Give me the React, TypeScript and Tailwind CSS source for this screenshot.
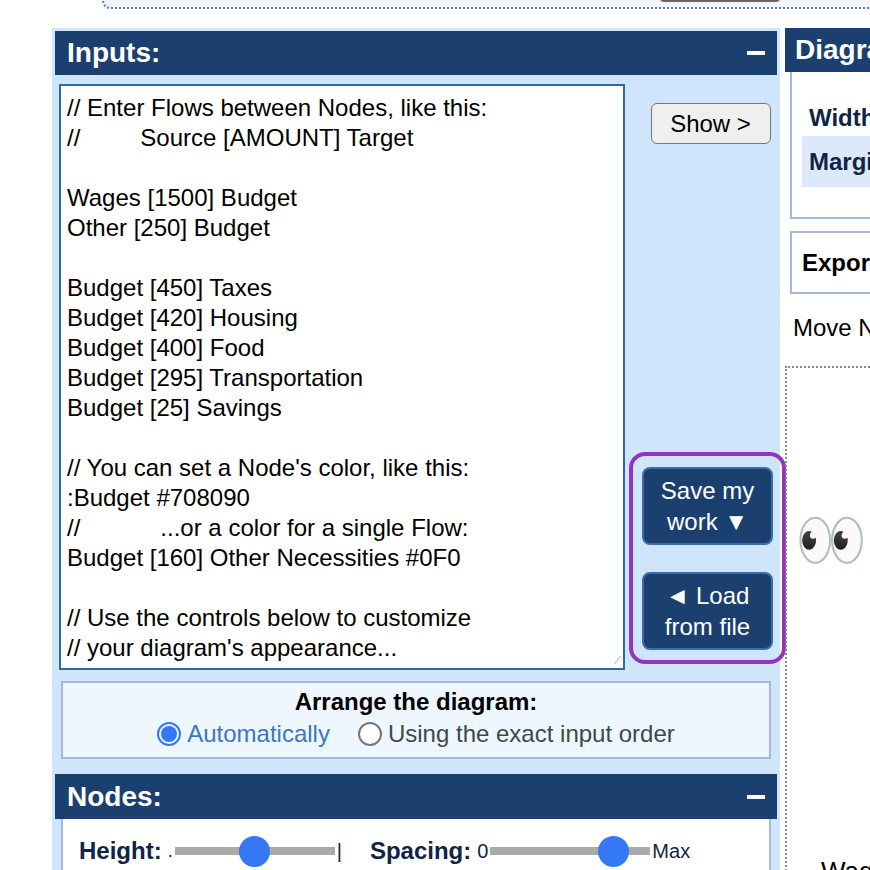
import React from "react";

const lines = [
  "// Enter Flows between Nodes, like this:",
  "//         Source [AMOUNT] Target",
  "",
  "Wages [1500] Budget",
  "Other [250] Budget",
  "",
  "Budget [450] Taxes",
  "Budget [420] Housing",
  "Budget [400] Food",
  "Budget [295] Transportation",
  "Budget [25] Savings",
  "",
  "// You can set a Node's color, like this:",
  ":Budget #708090",
  "//            ...or a color for a single Flow:",
  "Budget [160] Other Necessities #0F0",
  "",
  "// Use the controls below to customize",
  "// your diagram's appearance...",
];

function Slider({ pos }: { pos: number }) {
  return (
    <div className="relative h-[8px] w-[160px] bg-[#aaaaaa] mx-[2px] shrink-0">
      <div className="absolute top-[-11px] w-[31px] h-[31px] rounded-full bg-[#3478f6]" style={{ left: pos }} />
    </div>
  );
}

export default function App() {
  return (
    <div className="w-[870px] h-[870px] overflow-hidden bg-white relative" style={{ fontFamily: '"Liberation Sans", Arial, sans-serif' }}>
      <div className="h-[28px] relative">
        <div className="absolute left-[102px] top-[-20px] w-[800px] h-[29px] bg-[#f3f4fc] border-b-2 border-l-2 border-dotted border-[#5a7fb0] rounded-bl-[8px]" />
        <div className="absolute left-[660px] top-[-10px] w-[120px] h-[12px] bg-[#666] rounded-b-[4px]" />
      </div>
      <div className="flex">
        <div className="w-[52px] shrink-0" />
        <div className="w-[728px] shrink-0 bg-[#cfe5fb] px-[3px] pt-[3px] h-[842px]">
          <div className="h-[44px] bg-[#1b4070] flex items-center justify-between px-[12px] text-white font-bold text-[28px]">
            <span>Inputs:</span>
            <span className="w-[18px] h-[4px] bg-white" />
          </div>
          <div className="flex pt-[9px]">
            <div className="ml-[4px] w-[566px] shrink-0 h-[586px] bg-white border-2 border-[#2f6a9c] px-[6px] pt-[7px] text-[24px] leading-[30px] text-black whitespace-pre relative">
              {lines.map((l, i) => (<div key={i} className="h-[30px]">{l}</div>))}
              <div className="absolute right-[2px] bottom-[2px] text-[#888] text-[10px] leading-[10px]">⟋</div>
            </div>
            <div className="flex-1 flex flex-col items-center relative">
              <div className="mt-[19px] w-[120px] h-[41px] border border-[#777] rounded-[6px] bg-[#efefef] text-[24px] flex items-center justify-center ml-[10px]">Show &gt;</div>
              <div className="mt-[308px] ml-[4px] w-[157px] h-[212px] border-[4px] border-[#9333c0] rounded-[16px] flex flex-col items-center justify-center gap-[27px]">
                <div className="w-[131px] h-[78px] bg-[#1b4070] border-2 border-[#3a6ea5] rounded-[8px] text-white text-[24px] leading-[31px] text-center flex flex-col justify-center">Save my<br />work ▼</div>
                <div className="w-[131px] h-[78px] bg-[#1b4070] border-2 border-[#3a6ea5] rounded-[8px] text-white text-[24px] leading-[31px] text-center flex flex-col justify-center">◄ Load<br />from file</div>
              </div>
            </div>
          </div>
          <div className="mt-[11px] mx-[6px] h-[78px] bg-[#eef6ff] border-2 border-[#a6b8d8] flex flex-col items-center pt-[4px]">
            <div className="font-bold text-[24px] leading-[30px]">Arrange the diagram:</div>
            <div className="flex items-center text-[24px] leading-[30px] mt-[2px]">
              <span className="w-[24px] h-[24px] rounded-full border-2 border-[#3478f6] flex items-center justify-center mr-[6px]"><span className="w-[16px] h-[16px] rounded-full bg-[#3478f6]" /></span>
              <span className="text-[#3b77c0]">Automatically</span>
              <span className="w-[24px] h-[24px] rounded-full border-2 border-[#777] bg-white ml-[28px] mr-[6px]" />
              <span className="text-[#3c4a4a]">Using the exact input order</span>
            </div>
          </div>
          <div className="mt-[15px] h-[45px] bg-[#1b4070] flex items-center justify-between px-[12px] text-white font-bold text-[28px]">
            <span>Nodes:</span>
            <span className="w-[18px] h-[4px] bg-white" />
          </div>
          <div className="mx-[6px] h-[60px] bg-white border-2 border-t-0 border-[#a6b8d8] flex items-center px-[16px] pt-[6px] text-[24px] text-[#0f2447] whitespace-nowrap">
            <span className="font-bold">Height:</span>
            <span className="text-[18px] ml-[6px]">.</span>
            <Slider pos={64} />
            <span className="text-[20px]">|</span>
            <span className="font-bold ml-[28px]">Spacing:</span>
            <span className="text-[20px] ml-[6px]">0</span>
            <Slider pos={108} />
            <span className="text-[20px]">Max</span>
          </div>
        </div>
        <div className="flex-1 min-w-0 pl-[5px] overflow-hidden">
          <div className="h-[44px] bg-[#1b4070] text-white font-bold text-[28px] flex items-center pl-[10px] whitespace-nowrap">Diagram</div>
          <div className="ml-[5px] h-[147px] border-2 border-t-0 border-r-0 border-[#a6b8d8] pt-[28px] text-[24px] font-bold text-[#0f2447] whitespace-nowrap">
            <div className="pl-[17px] h-[34px]">Width</div>
            <div className="mt-[2px] ml-[10px] pl-[7px] h-[51px] bg-[#dbe9fb] flex items-center">Margins</div>
          </div>
          <div className="ml-[5px] mt-[12px] h-[63px] border-2 border-r-0 border-[#a6b8d8] font-bold text-[24px] flex items-center pl-[10px] whitespace-nowrap">Export</div>
          <div className="mt-[16px] pl-[8px] text-[24px] whitespace-nowrap">Move Nodes</div>
          <div className="mt-[20px] h-[520px] border-l-2 border-t-2 border-dotted border-[#888] relative">
            <div className="absolute left-[8px] top-[140px] text-[58px] leading-[64px] whitespace-nowrap" style={{ fontFamily: '"Noto Color Emoji", sans-serif' }}>👀</div>
            <div className="absolute left-[34px] top-[484px] text-[26px] whitespace-nowrap">Wages</div>
          </div>
        </div>
      </div>
    </div>
  );
}
